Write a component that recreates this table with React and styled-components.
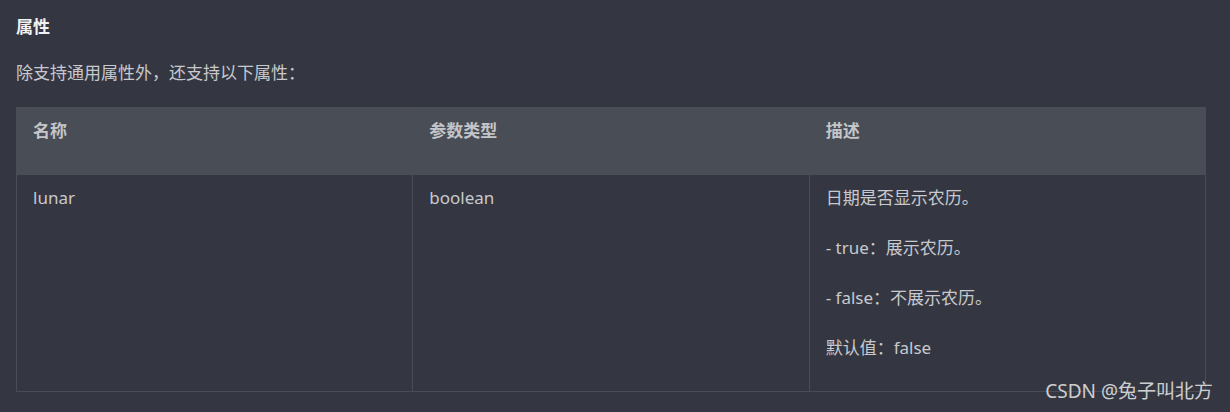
import styled, { createGlobalStyle } from "styled-components";

const rows = [
  {
    name: "lunar",
    type: "boolean",
    desc: ["日期是否显示农历。", "- true：展示农历。", "- false：不展示农历。", "默认值：false"],
  },
];

const App = () => {
  return (
    <Page>
      <GlobalStyle />
      <Title>属性</Title>
      <Intro>除支持通用属性外，还支持以下属性：</Intro>
      <Table>
        <thead>
          <tr>
            <HeadCell><Line>名称</Line></HeadCell>
            <HeadCell><Line>参数类型</Line></HeadCell>
            <HeadCell><Line>描述</Line></HeadCell>
          </tr>
        </thead>
        <tbody>
          {rows.map((row) => (
            <tr key={row.name}>
              <Cell><Line>{row.name}</Line></Cell>
              <Cell><Line>{row.type}</Line></Cell>
              <Cell>
                {row.desc.map((d) => (
                  <Line key={d}>{d}</Line>
                ))}
              </Cell>
            </tr>
          ))}
        </tbody>
      </Table>
      <Watermark>CSDN @兔子叫北方</Watermark>
    </Page>
  );
};

export default App;

// styled Components
const GlobalStyle = createGlobalStyle`
  html, body {
    margin: 0;
    padding: 0;
    background: #343741;
  }
  body {
    font-family: "Noto Sans", "Noto Sans CJK SC", sans-serif;
  }
`;

const Page = styled.div`
  position: relative;
  width: 1230px;
  height: 412px;
  box-sizing: border-box;
  padding: 15px 24px 0 16px;
  background: #343741;
  color: #c8c9ce;
  overflow: hidden;
`;

const Title = styled.h3`
  margin: 0;
  font-size: 17px;
  line-height: 24px;
  font-weight: bold;
  color: #f2f2f2;
`;

const Intro = styled.p`
  margin: 22px 0 22px;
  font-size: 17px;
  line-height: 24px;
  color: #c8c9ce;
`;

const Table = styled.table`
  width: 1190px;
  border-collapse: collapse;
  table-layout: fixed;
  border: 1px solid #4a4d56;
`;

const Cell = styled.td`
  border: 1px solid #4a4d56;
  padding: 11px 16px 5px;
  vertical-align: top;
  text-align: left;
  font-size: 17px;
  color: #c8c9ce;
`;

const HeadCell = styled(Cell).attrs({ as: "th" })`
  background: #494d56;
  font-weight: bold;
  color: #c4c5c9;
`;

const Line = styled.p`
  margin: 0 0 26px;
  line-height: 24px;
`;

const Watermark = styled.span`
  position: absolute;
  right: 17px;
  top: 379px;
  font-size: 19px;
  line-height: 24px;
  color: rgba(235, 235, 235, 0.85);
`;
